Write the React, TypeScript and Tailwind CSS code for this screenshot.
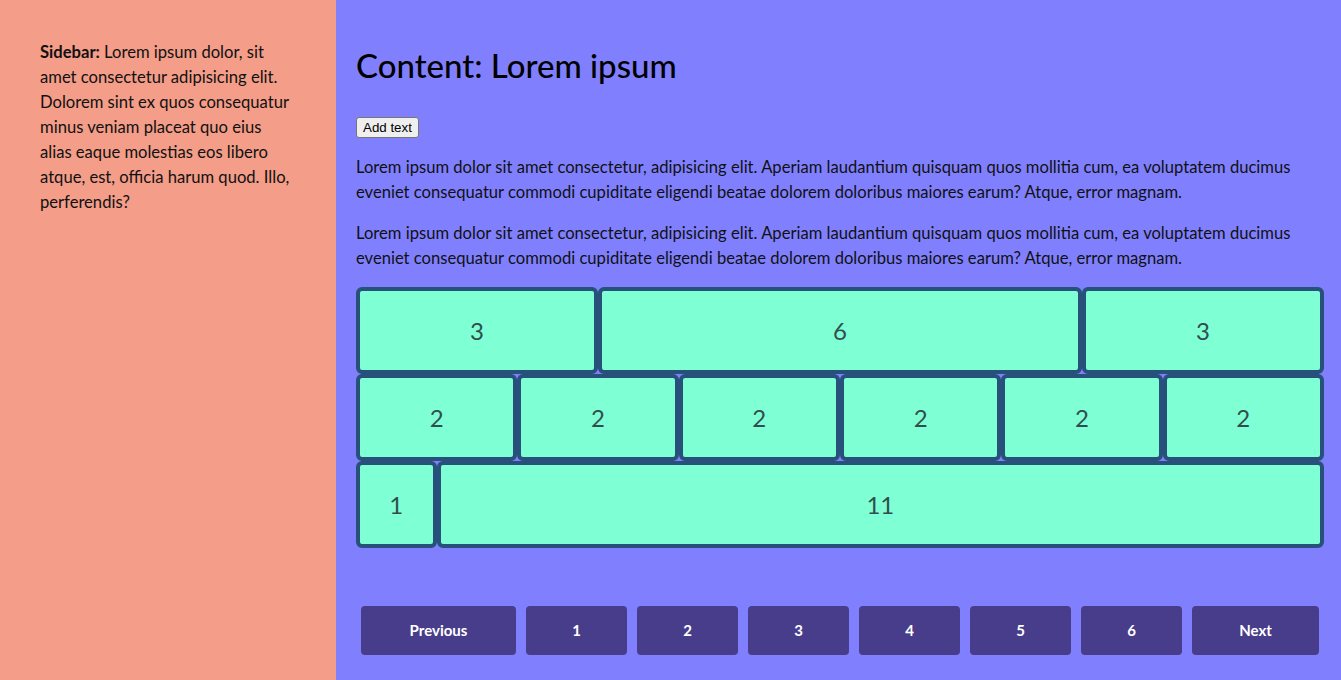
import React from 'react';

const rows: number[][] = [
    [3, 6, 3],
    [2, 2, 2, 2, 2, 2],
    [1, 11],
];

const spanClass: Record<number, string> = {
    1: 'col-span-1',
    2: 'col-span-2',
    3: 'col-span-3',
    6: 'col-span-6',
    11: 'col-span-11',
};

const lorem =
    'Lorem ipsum dolor sit amet consectetur, adipisicing elit. Aperiam laudantium quisquam quos mollitia cum, ea voluptatem ducimus eveniet consequatur commodi cupiditate eligendi beatae dolorem doloribus maiores earum? Atque, error magnam.';

const App: React.FC = () => {
    const pages = [1, 2, 3, 4, 5, 6];

    return (
        <div className="flex min-h-[680px] text-[#111] font-['Lato','Liberation_Sans',sans-serif] text-[16.6px] leading-[25px]">
            <aside className="w-[336px] shrink-0 bg-[#f49d88] p-10">
                <p className="w-[256px]">
                    <b>Sidebar:</b> Lorem ipsum dolor, sit amet consectetur adipisicing elit. Dolorem sint ex quos
                    consequatur minus veniam placeat quo eius alias eaque molestias eos libero atque, est, officia
                    harum quod. Illo, perferendis?
                </p>
            </aside>

            <main className="flex-1 bg-[#8080ff] pl-5 pr-[17px] pt-[46px] flex flex-col">
                <h1 className="text-[33px] leading-[38px] font-medium text-black">Content: Lorem ipsum</h1>

                <div className="mt-[33px] flex">
                    <button className="bg-[#efefef] border border-[#767676] rounded-[3px] px-[6px] h-[21px] text-[13.33px] leading-[16px] font-['Liberation_Sans',sans-serif] text-black">
                        Add text
                    </button>
                </div>

                <p className="mt-[17px]">{lorem}</p>
                <p className="mt-4">{lorem}</p>

                <div className="mt-4 grid grid-cols-12">
                    {rows.map((row, i) =>
                        row.map((span, j) => (
                            <div
                                key={`${i}-${j}`}
                                className={`${spanClass[span]} h-[87px] flex items-center justify-center bg-[#7fffd4] border-4 border-[#27507a] rounded-[6px] text-[24px] text-[#2f4f4f]`}
                            >
                                {span}
                            </div>
                        ))
                    )}
                </div>

                <nav className="mt-[58px] flex gap-[10px] px-[5px] text-white font-bold text-[15px]">
                    <button className="w-[155px] h-[49px] rounded-[4px] bg-[#483d8b]">Previous</button>
                    {pages.map((p) => (
                        <button key={p} className="flex-1 h-[49px] rounded-[4px] bg-[#483d8b]">
                            {p}
                        </button>
                    ))}
                    <button className="w-[127px] h-[49px] rounded-[4px] bg-[#483d8b]">Next</button>
                </nav>
            </main>
        </div>
    );
};

export default App;
